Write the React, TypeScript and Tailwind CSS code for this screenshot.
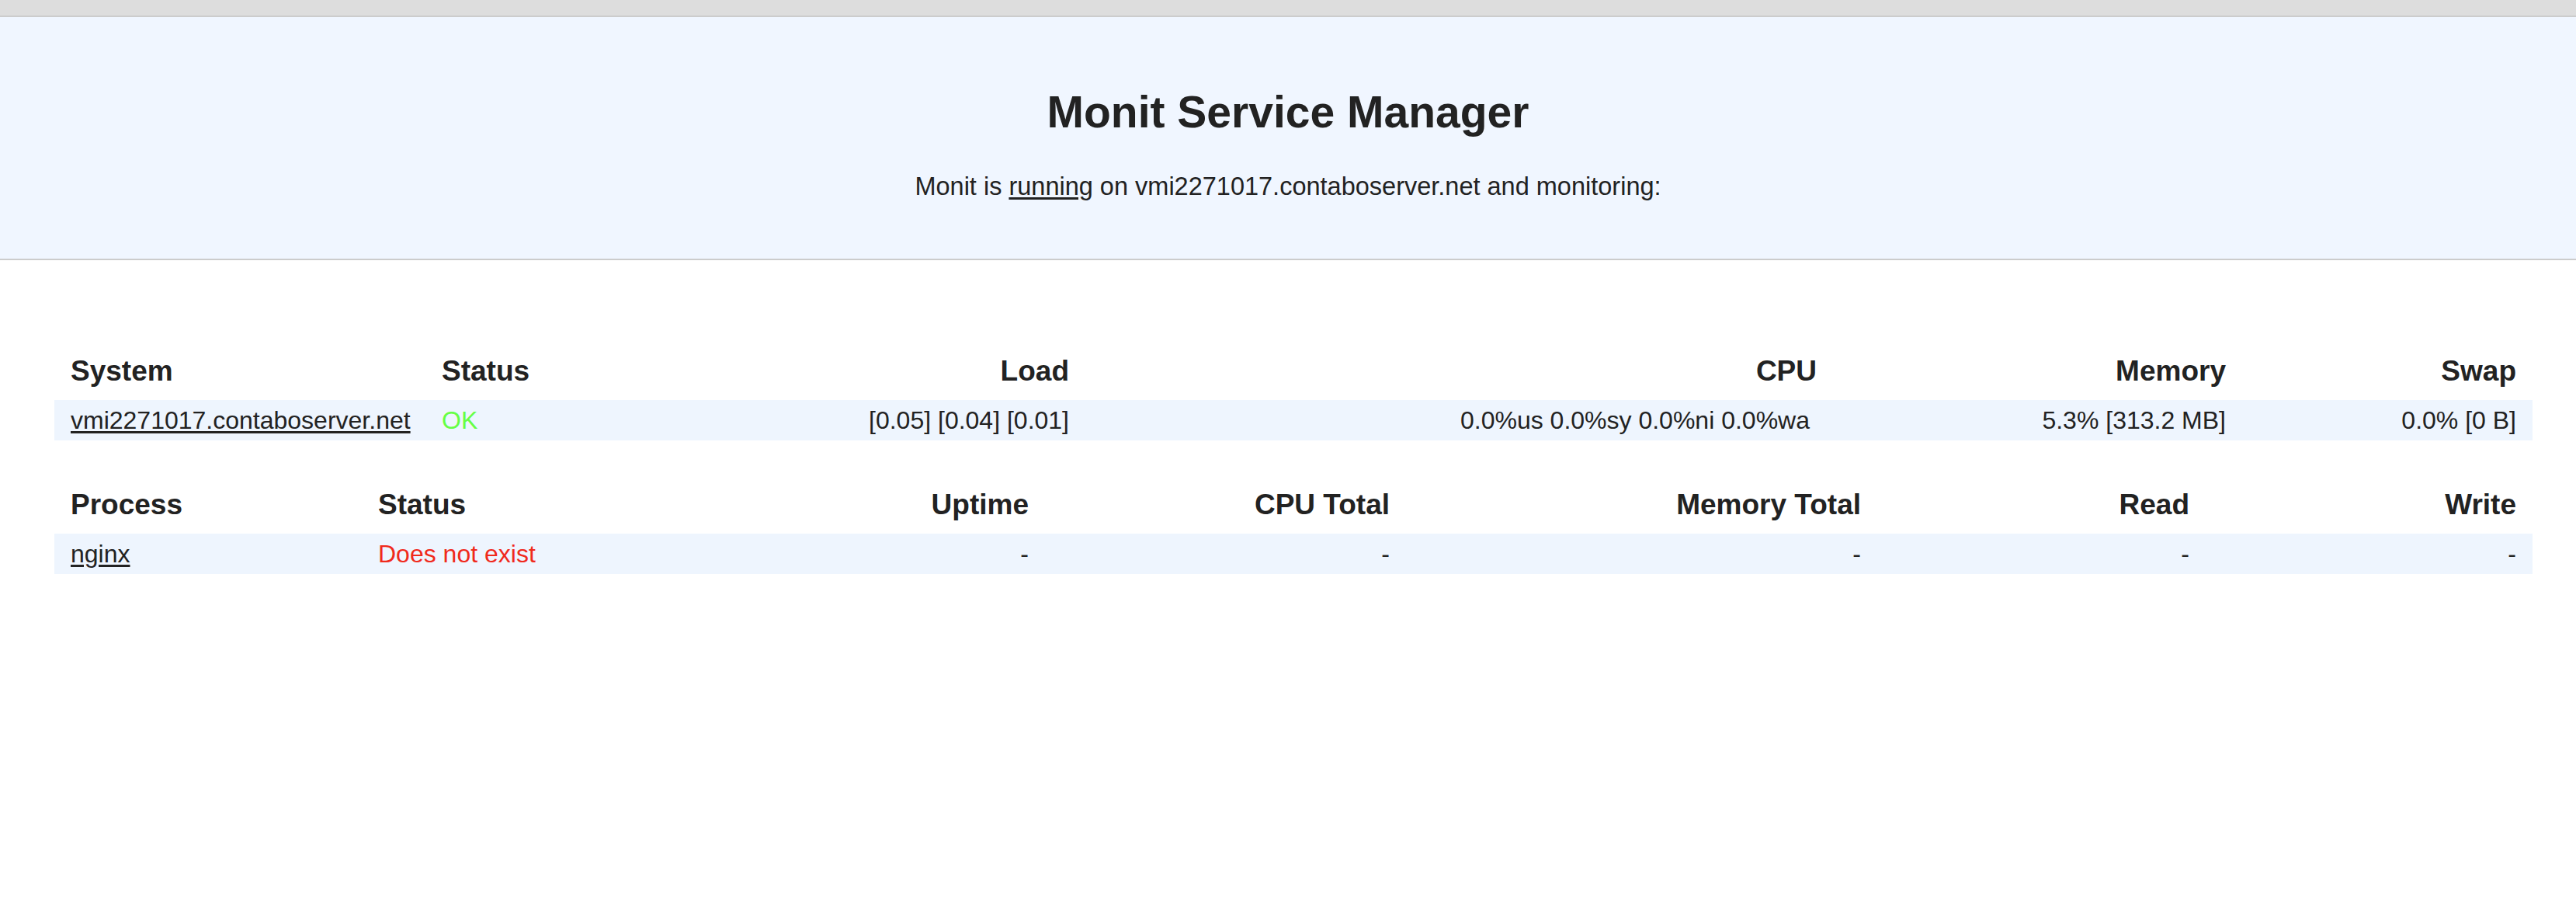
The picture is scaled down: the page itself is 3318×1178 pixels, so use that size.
import React from 'react';

const systemCols = ['System', 'Status', 'Load', 'CPU', 'Memory', 'Swap'];
const processCols = ['Process', 'Status', 'Uptime', 'CPU Total', 'Memory Total', 'Read', 'Write'];

const App: React.FC = () => {
  return (
    <div className="min-h-[1178px] bg-white text-[#222222] font-['Liberation_Sans',Arial,sans-serif]">
      <div className="h-[20px] bg-[#dddddd] border-b-2 border-[#cccccc] box-content" />
      <div className="bg-[#f0f6ff] border-b-2 border-[#cccccc] pt-[90px] pb-[73px] text-center">
        <h1 className="text-[57px] leading-[64px] font-bold">Monit Service Manager</h1>
        <p className="mt-[44px] text-[32.5px] leading-[40px]">
          Monit is <a className="underline underline-offset-[3px]">running</a> on vmi2271017.contaboserver.net and monitoring:
        </p>
      </div>

      <div className="ml-[70px] mr-[56px] pt-[121px]">
        {/* system table */}
        <div className="grid grid-cols-[478px_352px_498px_963px_527px_1fr] text-[37px] leading-[44px] font-bold">
          {systemCols.map((c, i) => (
            <div key={c} className={'px-[21px] ' + (i < 2 ? 'text-left' : 'text-right')}>
              {c}
            </div>
          ))}
        </div>
        <div className="mt-[15px] grid grid-cols-[478px_352px_498px_963px_527px_1fr] bg-[#eef5fe] text-[32px] leading-[52px]">
          <div className="px-[21px]">
            <a className="underline underline-offset-[3px]">vmi2271017.contaboserver.net</a>
          </div>
          <div className="px-[21px] text-[#66ff44]">OK</div>
          <div className="px-[21px] text-right">[0.05] [0.04] [0.01]</div>
          <div className="px-[21px] text-right pr-[30px]">0.0%us 0.0%sy 0.0%ni 0.0%wa</div>
          <div className="px-[21px] text-right">5.3% [313.2 MB]</div>
          <div className="px-[21px] text-right">0.0% [0 B]</div>
        </div>

        {/* process table */}
        <div className="mt-[61px] grid grid-cols-[396px_434px_446px_465px_607px_423px_1fr] text-[37px] leading-[44px] font-bold">
          {processCols.map((c, i) => (
            <div key={c} className={'px-[21px] ' + (i < 2 ? 'text-left' : 'text-right')}>
              {c}
            </div>
          ))}
        </div>
        <div className="mt-[15px] grid grid-cols-[396px_434px_446px_465px_607px_423px_1fr] bg-[#eef5fe] text-[32px] leading-[52px]">
          <div className="px-[21px]">
            <a className="underline underline-offset-[3px]">nginx</a>
          </div>
          <div className="px-[21px] text-[#f02a1c]">Does not exist</div>
          <div className="px-[21px] text-right">-</div>
          <div className="px-[21px] text-right">-</div>
          <div className="px-[21px] text-right">-</div>
          <div className="px-[21px] text-right">-</div>
          <div className="px-[21px] text-right">-</div>
        </div>
      </div>
    </div>
  );
};

export default App;
